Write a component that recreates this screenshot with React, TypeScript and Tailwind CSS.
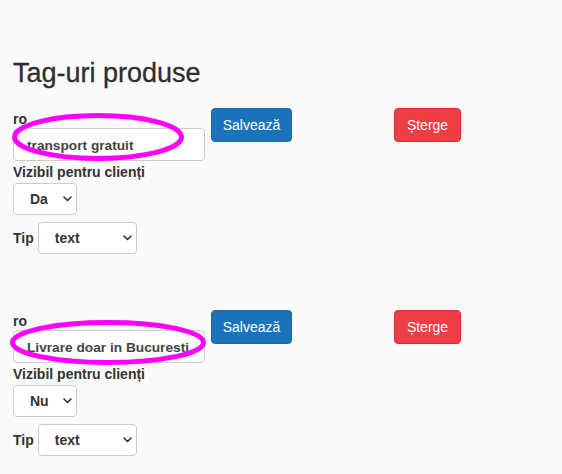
type Tag = { text: string; visible: 'Da' | 'Nu'; tip: string };

const tags: Tag[] = [
  { text: 'transport gratuit', visible: 'Da', tip: 'text' },
  { text: 'Livrare doar in Bucuresti', visible: 'Nu', tip: 'text' },
];

function Select({ value, options, className }: { value: string; options: string[]; className: string }) {
  return (
    <div className={`relative ${className}`}>
      <select
        defaultValue={value}
        className="w-full h-full appearance-none bg-white border border-[#cccccc] rounded-[4px] pl-[16px] pr-5 text-[14px] font-bold text-[#333] outline-none"
      >
        {options.map((o) => (
          <option key={o}>{o}</option>
        ))}
      </select>
      <svg className="absolute right-[5px] top-1/2 -translate-y-1/2 pointer-events-none" width="9" height="6" viewBox="0 0 9 6">
        <polyline points="1,1 4.5,4.5 8,1" fill="none" stroke="#333" strokeWidth="1.6" strokeLinecap="round" strokeLinejoin="round" />
      </svg>
    </div>
  );
}

function TagForm({ tag }: { tag: Tag }) {
  return (
    <div className="flex items-start">
      <div className="flex flex-col pt-[3px]">
        <label className="text-[14px] font-bold leading-[17px]">ro</label>
        <input
          defaultValue={tag.text}
          className="w-[192px] h-[33px] bg-white border border-[#cccccc] rounded-[4px] pl-[13px] pr-[2px] pt-[2px] text-[13.7px] font-bold text-[#444] outline-none"
        />
        <label className="mt-[3px] text-[14px] font-bold leading-[17px]">Vizibil pentru clienți</label>
        <Select value={tag.visible} options={['Da', 'Nu']} className="mt-[2px] w-[64px] h-[32px]" />
        <div className="mt-[7px] flex items-center gap-[4px]">
          <span className="text-[14px] font-bold">Tip</span>
          <Select value={tag.tip} options={['text', 'link']} className="w-[99px] h-[32px]" />
        </div>
      </div>
      <button className="ml-[6px] w-[81px] h-[34px] rounded-[4px] bg-[#1b74bb] border border-[#1a69a8] text-white text-[14px]">
        Salvează
      </button>
      <button className="ml-[102px] w-[67px] h-[34px] rounded-[4px] bg-[#ee3d43] border border-[#dc3035] text-white text-[14px]">
        Șterge
      </button>
    </div>
  );
}

export default function App() {
  return (
    <div className="relative min-h-[474px] bg-[#fafafa] text-[#333] px-[13px] pt-[57px] font-['Liberation_Sans',Arial,sans-serif]">
      <h1 className="text-[27px] leading-[32px] text-[#2e2e2e] [-webkit-text-stroke:0.3px_#2e2e2e]">Tag-uri produse</h1>
      <div className="mt-[19px] flex flex-col gap-[56px]">
        {tags.map((t) => (
          <TagForm key={t.text} tag={t} />
        ))}
      </div>
      <svg className="absolute inset-0 pointer-events-none" width="562" height="474">
        <ellipse cx="98" cy="137" rx="83.5" ry="21.5" fill="none" stroke="#ff00ff" strokeWidth="5" />
        <ellipse cx="108" cy="342.5" rx="95.5" ry="20" fill="none" stroke="#ff00ff" strokeWidth="5" />
      </svg>
    </div>
  );
}
